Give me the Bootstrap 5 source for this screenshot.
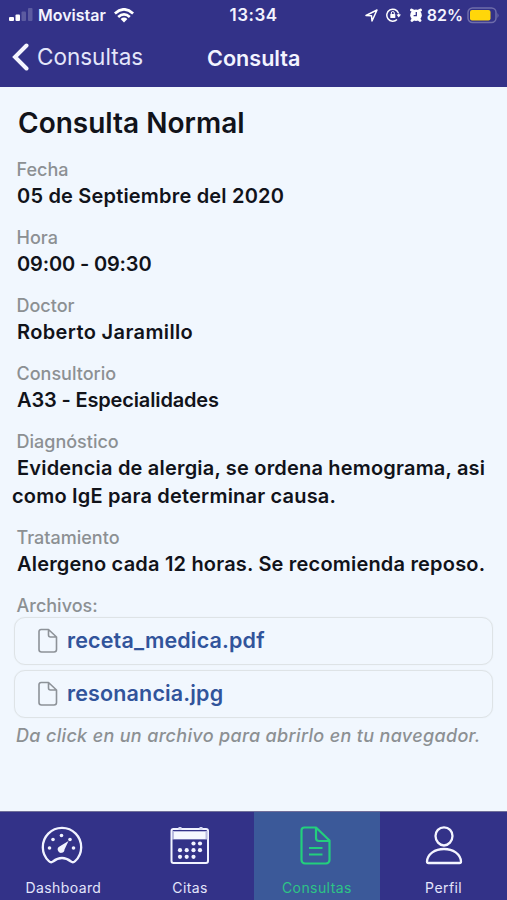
<!DOCTYPE html>
<html lang="es">
<head>
<meta charset="utf-8">
<meta name="viewport" content="width=device-width, initial-scale=1">
<title>Consulta</title>
<link href="https://cdn.jsdelivr.net/npm/bootstrap@5.3.0/dist/css/bootstrap.min.css" rel="stylesheet">
<style>
body{font-family:Inter,"Liberation Sans",sans-serif;background:#f1f7fe;color:#11131a;height:900px;overflow:hidden}
svg{display:block;flex:none}
.app-header{background:#333288;color:#f3f4ff;height:87px}
.status{height:30px;font-size:16px;font-weight:600;line-height:30px}
.side{width:210px}
.clock{font-size:17px;letter-spacing:.5px}
.carrier{font-size:16px;margin-left:5px;margin-right:8px}
.titlebar{height:57px;font-size:21.600px;line-height:56px}
.back{color:#e4e6fa;width:207px;padding-left:11px;font-size:22.500px}
.back-text{margin-left:8px}
.screen-title{font-weight:600}
.content-area{height:724px;padding:21px 14px 0 12px}
.heading{font-size:28px;font-weight:600;line-height:30px;margin:0 0 20px 6px}
.field{margin-bottom:16px}
.field-label{font-size:18px;line-height:24px;color:#8c9093;padding:0 0 0 4.500px;font-weight:500;margin:0}
.field-value{font-size:20px;line-height:28px;text-indent:5px;font-weight:600;margin:0;white-space:nowrap;letter-spacing:.19px}
.value-wide{letter-spacing:.37px}
.value-tight{letter-spacing:-.15px}
.files{gap:5px;margin-top:-1px}
.file-row{height:48px;margin-left:2px;border:1.500px solid #dee3e6;box-shadow:0 0 1px #dee3e6;border-radius:11px;padding:0 0 2px 22px;color:#31549b;font-size:21.500px;font-weight:600;letter-spacing:.15px;text-decoration:none}
.hint{font-size:18px;line-height:24px;font-weight:500;font-style:italic;color:#8c9093;margin:6px 0 0 4px;letter-spacing:.33px;white-space:nowrap}
.tabs{height:89px;background:#333288;border-top:1px solid #706f99;color:#e3e5fb}
.tab{color:#e3e5fb;text-decoration:none;font-size:14px;line-height:18px;padding-top:10px;letter-spacing:.42px}
.tab svg{margin-bottom:9px}
.tab.current{background:#3b5999;color:#2dc486}
</style>
</head>
<body class="d-flex flex-column">
<header class="app-header">
  <div class="status d-flex justify-content-between">
    <div class="side d-flex align-items-center">
      <svg width="24" height="14" viewBox="0 0 24 14" style="margin-left:9px"><g fill="#fff"><rect x="0" y="9" width="5" height="4" rx="1"/><rect x="6.500" y="6.500" width="4.500" height="6.500" rx="1"/><g opacity=".2"><rect x="12.500" y="3.500" width="4.500" height="9.500" rx="1"/><rect x="19" y="0" width="4.500" height="13" rx="1"/></g></g></svg>
      <span class="carrier">Movistar</span>
      <svg width="20" height="15" viewBox="0 0 20 15" fill="none" stroke="#fff" stroke-width="2.700"><path d="M.9 5.400Q10-2.700 19.100 5.400M4.200 9Q10 3.800 15.800 9"/><path d="M6.600 11Q10 8.100 13.400 11L10 14.600Z" fill="#fff" stroke="none"/></svg>
    </div>
    <span class="clock">13:34</span>
    <div class="side d-flex align-items-center justify-content-end pe-2">
      <svg width="13" height="13" viewBox="0 0 13 13" fill="none" stroke="#fff" stroke-width="1.500" stroke-linejoin="round"><path d="M1 6.500 12 1 7 12 6.500 6.700Z"/></svg>
      <svg class="ms-2" width="15" height="14" viewBox="0 0 15 14"><path d="M12.400 5A6 6 0 1 0 11 11.500M12.700 5.500V8" fill="none" stroke="#fff" stroke-width="1.500"/><path d="M10.500 6.500H15L12.700 9.500Z" fill="#fff"/><rect x="4.300" y="6" width="5" height="4" rx=".6" fill="#fff"/><path d="M5.300 6V5a1.500 1.500 0 0 1 3 0v1" fill="none" stroke="#fff"/></svg>
      <svg class="ms-2" width="14" height="14" viewBox="0 0 14 14"><path d="M2.500 2 4.500 3M11.500 2 9.500 3M3 12.500 4 11.500M11 12.500 10 11.500" stroke="#fff" stroke-width="2.800" stroke-linecap="round"/><circle cx="7" cy="7.200" r="5.800" fill="#fff"/><path d="M7.300 4V7.700H4.600" fill="none" stroke="#333288" stroke-width="1.300"/></svg>
      <span class="ms-1">82%</span>
      <svg class="ms-1" width="32" height="17" viewBox="0 0 32 17"><rect x="1" y="1" width="28" height="14.500" rx="4.500" fill="none" stroke="#6f6daa" stroke-width="1.500"/><rect x="3" y="3" width="20.500" height="10.500" rx="2" fill="#ffd60a"/><path d="M30.500 6v5q2-2.500 0-5" fill="#7775b0"/></svg>
    </div>
  </div>
  <div class="titlebar d-flex">
    <a class="back d-flex align-items-center text-decoration-none pb-1" href="#"><svg width="18" height="28" viewBox="0 0 18 28" fill="none" stroke="#f5f5ff" stroke-width="4" stroke-linecap="round" stroke-linejoin="miter"><path d="M15.500 2.500 4 14 15.500 25.500"/></svg><span class="back-text">Consultas</span></a>
    <span class="screen-title">Consulta</span>
  </div>
</header>
<main class="content-area">
  <h1 class="heading">Consulta Normal</h1>
  <div class="field"><p class="field-label">Fecha</p><p class="field-value">05 de Septiembre del 2020</p></div>
  <div class="field"><p class="field-label">Hora</p><p class="field-value value-tight">09:00 - 09:30</p></div>
  <div class="field"><p class="field-label">Doctor</p><p class="field-value value-wide">Roberto Jaramillo</p></div>
  <div class="field"><p class="field-label">Consultorio</p><p class="field-value value-tight">A33 - Especialidades</p></div>
  <div class="field"><p class="field-label">Diagnóstico</p><p class="field-value">Evidencia de alergia, se ordena hemograma, asi<br>como IgE para determinar causa.</p></div>
  <div class="field"><p class="field-label">Tratamiento</p><p class="field-value">Alergeno cada 12 horas. Se recomienda reposo.</p></div>
  <p class="field-label">Archivos:</p>
  <div class="files d-flex flex-column">
    <a href="#" class="file-row d-flex align-items-center"><svg class="me-2" width="22" height="26" viewBox="0 0 22 26" fill="none" stroke="#8d9298" stroke-width="1.600" stroke-linejoin="round"><path d="M4 2.500h7.500L19.500 10v12.500a2.500 2.500 0 0 1-2.500 2.500H4.500A2.500 2.500 0 0 1 2 22.500V4.500a2 2 0 0 1 2-2ZM11.500 2.500V8a2 2 0 0 0 2 2h6"/></svg><span>receta_medica.pdf</span></a>
    <a href="#" class="file-row d-flex align-items-center"><svg class="me-2" width="22" height="26" viewBox="0 0 22 26" fill="none" stroke="#8d9298" stroke-width="1.600" stroke-linejoin="round"><path d="M4 2.500h7.500L19.500 10v12.500a2.500 2.500 0 0 1-2.500 2.500H4.500A2.500 2.500 0 0 1 2 22.500V4.500a2 2 0 0 1 2-2ZM11.500 2.500V8a2 2 0 0 0 2 2h6"/></svg><span>resonancia.jpg</span></a>
  </div>
  <p class="hint">Da click en un archivo para abrirlo en tu navegador.</p>
</main>
<nav class="tabs row g-0">
  <a href="#" class="tab col-3 d-flex flex-column align-items-center"><svg width="48" height="48" viewBox="0 0 48 48" fill="none" stroke="#f1f3ff" stroke-width="2.300" stroke-linejoin="round"><path d="M14 39.500Q12 41.300 9.800 39A19.200 19.200 0 1 1 36.200 39Q34 41.300 32 39.500Q23 32.500 14 39.500Z"/><g fill="#f1f3ff" stroke="none"><circle cx="10.500" cy="26" r="1.800"/><circle cx="14" cy="17.500" r="1.800"/><circle cx="22.500" cy="13.500" r="1.800"/><circle cx="31" cy="17.500" r="1.800"/><circle cx="34.500" cy="26" r="1.800"/><path d="M29.500 19 25.500 27.500A3.400 3.400 0 1 1 20.500 24.500Z"/></g></svg><span>Dashboard</span></a>
  <a href="#" class="tab col-3 d-flex flex-column align-items-center"><svg width="48" height="48" viewBox="0 0 48 48"><rect x="5.500" y="7" width="36.500" height="34" rx="2" fill="none" stroke="#f1f3ff" stroke-width="2"/><path d="M14 5v3M35 5v3" stroke="#d7daf3" stroke-width="3"/><path d="M6 9h35.500v8.500H6Z" fill="#b9bce0"/><path d="M8 10h31.500v7H8Z" fill="#f5f8ff"/><g fill="#f1f3ff"><circle cx="27.500" cy="21.500" r="2.100"/><circle cx="34" cy="21.500" r="2.100"/><circle cx="14" cy="28.200" r="2.100"/><circle cx="20.700" cy="28.200" r="2.100"/><circle cx="27.500" cy="28.200" r="2.100"/><circle cx="34" cy="28.200" r="2.100"/><circle cx="14" cy="34.800" r="2.100"/><circle cx="20.700" cy="34.800" r="2.100"/><circle cx="27.500" cy="34.800" r="2.100"/></g></svg><span>Citas</span></a>
  <a href="#" class="tab current col-3 d-flex flex-column align-items-center"><svg width="48" height="48" viewBox="0 0 48 48" fill="none" stroke="#23cf7d" stroke-width="2.200" stroke-linejoin="round"><path d="M11.500 5.500h11.500L36.500 18.500V38a3.500 3.500 0 0 1-3.500 3.500H12A3.500 3.500 0 0 1 8.500 38V8.500a3 3 0 0 1 3-3ZM23 5.500V16a3 3 0 0 0 3 3h10.500M16 26h13.500M16 32.500h13.500"/></svg><span>Consultas</span></a>
  <a href="#" class="tab col-3 d-flex flex-column align-items-center"><svg width="48" height="48" viewBox="0 0 48 48" fill="none" stroke="#f4f5ff" stroke-width="2.300" stroke-linejoin="round"><path d="M24 5.300c5 0 8.500 4 8.500 8.700 0 5-4 9.500-8.500 9.500s-8.500-4.500-8.500-9.500c0-4.700 3.500-8.700 8.500-8.700ZM7 39.500C7.500 32 15 27 24 27s16.500 5 17 12.500q0 1.500-1.500 1.500H8.500Q7 41 7 39.500Z"/></svg><span>Perfil</span></a>
</nav>
<script src="https://cdn.jsdelivr.net/npm/bootstrap@5.3.0/dist/js/bootstrap.bundle.min.js"></script>
</body>
</html>
